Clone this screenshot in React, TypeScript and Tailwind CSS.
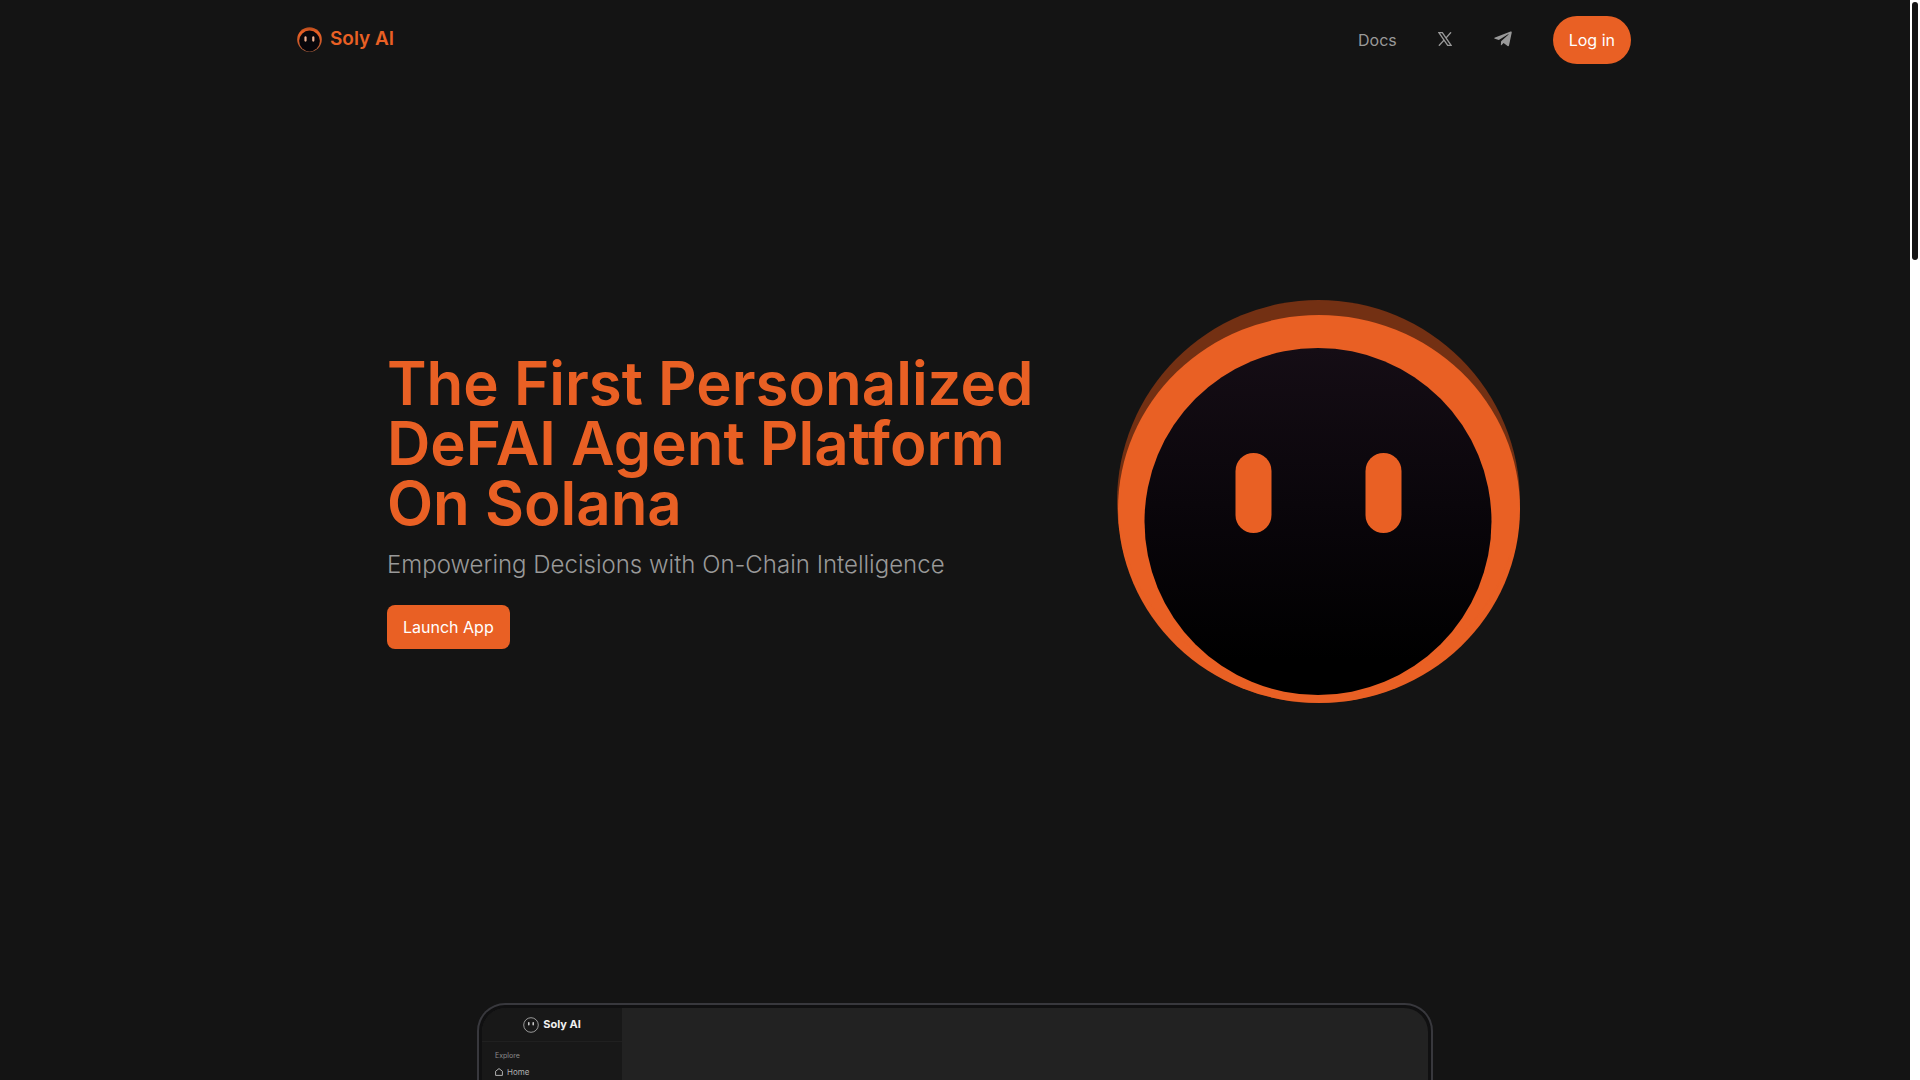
import React from 'react'
import { FaTelegramPlane } from 'react-icons/fa'

const ORANGE = '#e96024'

function LogoMark() {
  return (
    <svg viewBox="0 0 25 25" className="size-[25px]" aria-hidden="true">
      <defs>
        <linearGradient id="logo-ring" x1="0" y1="0" x2="0" y2="1">
          <stop offset="0" stopColor="#b34a1c" />
          <stop offset="0.2" stopColor="#e96024" />
          <stop offset="0.6" stopColor="#d05a28" />
          <stop offset="1" stopColor="#a05a3c" />
        </linearGradient>
      </defs>
      <circle cx="12.5" cy="12.5" r="12.3" fill="url(#logo-ring)" />
      <circle cx="12.5" cy="14" r="10.4" fill="#08060a" />
      <rect x="7.4" y="9.3" width="2.2" height="5.4" rx="1.1" fill="#efb091" />
      <rect x="15.2" y="9.3" width="2.2" height="5.4" rx="1.1" fill="#efb091" />
    </svg>
  )
}

function HeroFace() {
  return (
    <svg viewBox="0 0 403 403" className="mr-[3px] size-[403px]" aria-hidden="true">
      <defs>
        <linearGradient id="face-fill" x1="0" y1="0" x2="0" y2="1">
          <stop offset="0" stopColor="#150d15" />
          <stop offset="0.45" stopColor="#0a060b" />
          <stop offset="0.9" stopColor="#000000" />
        </linearGradient>
      </defs>
      <circle cx="201.5" cy="201.5" r="201.5" fill="#733013" />
      <ellipse cx="202" cy="209" rx="201" ry="194" fill={ORANGE} />
      <path d="M1 215a201 188 0 0 0 401.500-13.500A201.500 201.500 0 0 1 1 215z" fill={ORANGE} />
      <circle cx="201" cy="221.5" r="173.5" fill="url(#face-fill)" />
      <rect x="118.5" y="153" width="36" height="80" rx="18" fill={ORANGE} />
      <rect x="248.5" y="153" width="36" height="80" rx="18" fill={ORANGE} />
    </svg>
  )
}

function XIcon() {
  return (
    <svg viewBox="0 0 14 14" className="size-[14px]" fill="none" stroke="currentColor" aria-hidden="true">
      <path d="M.9.6h3.4l8.800 12.800H9.700z" strokeWidth="1.3" />
      <path d="M13 .3 7.900 6.100M6 8.100.900 13.700" strokeWidth="1.4" />
    </svg>
  )
}

function Header() {
  return (
    <header className="mx-auto flex h-20 w-full max-w-[1352px] items-center justify-between pl-[18px]">
      <a href="#" className="flex items-center gap-2 pb-px text-[19px] font-semibold text-[#e96024]">
        <LogoMark />
        Soly AI
      </a>
      <nav className="flex items-center gap-10 text-[#999999]">
        <a href="#docs">Docs</a>
        <a href="#x" aria-label="X" className="px-px pb-0.5">
          <XIcon />
        </a>
        <a href="#telegram" aria-label="Telegram" className="pb-0.5">
          <FaTelegramPlane className="size-5" />
        </a>
        <button type="button" className="h-12 rounded-3xl bg-[#e96024] px-4 text-white">
          Log in
        </button>
      </nav>
    </header>
  )
}

function Hero() {
  return (
    <section className="mx-auto flex w-full max-w-[1136px] items-center justify-between pt-[220px] pb-[300px]">
      <div className="max-w-[680px] pb-0.5">
        <h1 className="text-6xl leading-none font-semibold text-[#e96024]">
          The First Personalized DeFAI Agent Platform On Solana
        </h1>
        <p className="mt-4 text-2xl font-light text-[#999999]">
          Empowering Decisions with On-Chain Intelligence
        </p>
        <button type="button" className="mt-6 h-11 rounded-lg bg-[#e96024] px-4 text-white">
          Launch App
        </button>
      </div>
      <HeroFace />
    </section>
  )
}

function AppPreview() {
  return (
    <section className="mx-auto w-full max-w-[956px] rounded-t-[28px] border-2 border-b-0 border-[#38383d] bg-[#101011] px-[3px] pt-[3px]">
      <div className="flex h-[560px] overflow-hidden rounded-t-3xl bg-[#222222]">
        <aside className="w-[140px] bg-[#181818]">
          <div className="flex h-[34px] items-center justify-center gap-1 border-b border-[#202020] text-[11px] font-bold text-[#f0f0f0]">
            <svg viewBox="0 0 16 16" className="size-4" fill="none" aria-hidden="true">
              <circle cx="8" cy="8" r="7.3" stroke="#999999" />
              <path d="M5.8 5.6v2.200M10.200 5.600v2.200" stroke="#dddddd" strokeWidth="1.4" strokeLinecap="round" />
            </svg>
            Soly AI
          </div>
          <p className="mt-2 px-[13px] text-[7px] leading-[12px] text-[#8c8c8c]">Explore</p>
          <a href="#home" className="mt-1 flex items-center gap-1 px-[13px] text-[8px] leading-[12px] text-[#b0b0b0]">
            <svg viewBox="0 0 8 8" className="size-2" fill="none" stroke="currentColor" aria-hidden="true">
              <path d="M.6 3.2 4 .6l3.400 2.600v4.200H.6z" strokeLinejoin="round" />
            </svg>
            Home
          </a>
        </aside>
      </div>
    </section>
  )
}

export default function App() {
  return (
    <div className="flex h-screen overflow-hidden bg-[#141414] font-['Inter',sans-serif]">
      <main className="min-w-0 flex-1">
        <Header />
        <Hero />
        <AppPreview />
      </main>
      {/* Scrollbar */}
      <div className="w-[10px] bg-white px-[2px] py-[2px]">
        <div className="h-[24%] rounded-full bg-[#141414]" />
      </div>
    </div>
  )
}
